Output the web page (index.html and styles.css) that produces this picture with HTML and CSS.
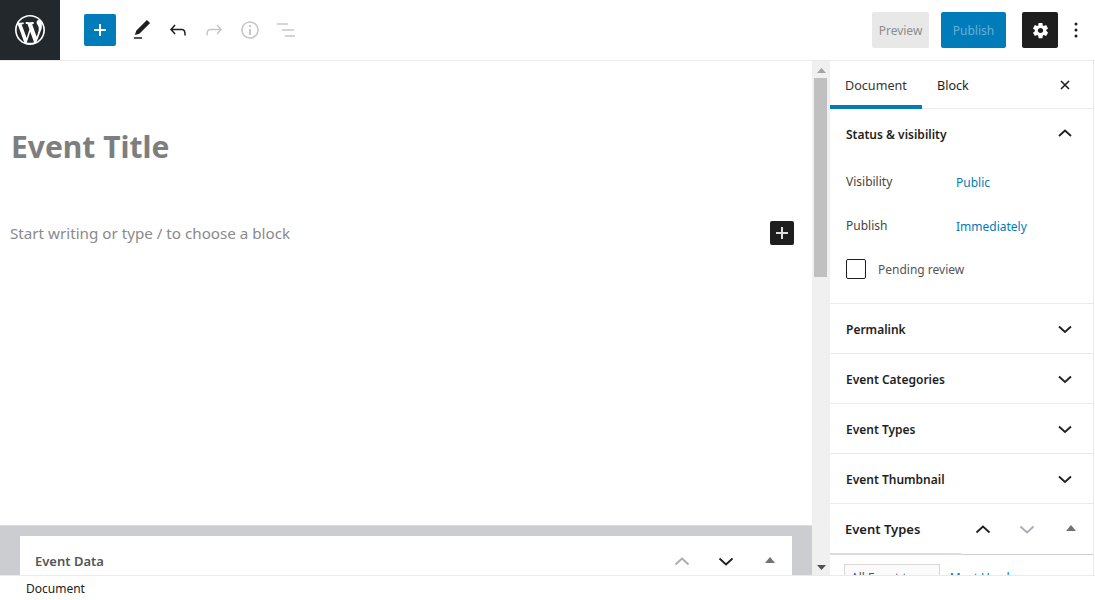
FILE: index.html
```html
<!DOCTYPE html>
<html lang="en">
<head>
<meta charset="utf-8">
<title>Add New Event</title>
<link rel="stylesheet" href="styles.css">
</head>
<body>
<div class="app">
  <header class="topbar">
    <div class="logo">
      <svg width="30" height="30" viewBox="0 0 20 20"><path fill="#fff" d="M20 10c0-5.52-4.480-10-10-10S0 4.480 0 10s4.480 10 10 10 10-4.480 10-10zM7.780 15.370L4.370 6.220c.55-.02 1.170-.08 1.170-.08.5-.06.44-1.130-.06-1.110 0 0-1.450.11-2.370.11-.18 0-.37 0-.58-.01C4.120 2.690 6.890 1.010 10 1.010c2.330 0 4.450.87 6.050 2.340-.68-.11-1.650.39-1.650 1.580 0 .74.45 1.360.9 2.100.35.61.55 1.360.55 2.460 0 1.490-1.400 5-1.400 5l-3.030-8.350c.54-.02.82-.17.82-.17.5-.05.44-1.250-.06-1.220 0 0-1.440.12-2.380.12-.87 0-2.330-.12-2.330-.12-.5-.03-.56 1.200-.06 1.220l.92.08 1.260 3.410zM17.410 10c.24-.64.74-1.870.43-4.250.7 1.290 1.050 2.710 1.050 4.250 0 3.290-1.730 6.240-4.400 7.780.97-2.590 1.940-5.200 2.920-7.780zM6.100 18.090C3.120 16.650 1.110 13.530 1.110 10c0-1.300.23-2.480.72-3.590C3.250 10.300 4.670 14.200 6.100 18.090zm4.030-6.960l2.580 6.980c-.89.29-1.820.45-2.710.45-.74 0-1.480-.1-2.160-.3.76-2.220 1.530-4.460 2.290-7.130z"/></svg>
    </div>
    <div class="tools">
      <button class="add-btn" aria-label="Add block"><svg width="16" height="16" viewBox="0 0 16 16"><path d="M7 2h2v5h5v2H9v5H7V9H2V7h5z" fill="#fff"/></svg></button>
      <svg class="tool" width="24" height="24" viewBox="0 0 24 24"><path fill="#1e1e1e" d="M20.100 5.100L16.900 2 6.200 12.700l-1.300 4.400 4.500-1.300L20.100 5.100zM4 20.800h8v-1.500H4v1.500z"/></svg>
      <svg class="tool" width="24" height="24" viewBox="0 0 24 24"><path fill="#1e1e1e" d="M18.300 11.700c-.6-.6-1.400-.9-2.300-.9H6.700l2.900-3.300-1.100-1-4.500 5L8.500 16.500l1.100-1-2.900-3.300H16c.5 0 .9.200 1.300.5 1 1 1 3.400 1 4.500v.3h1.500v-.2c0-1.500 0-4.300-1.500-5.800z"/></svg>
      <svg class="tool" width="24" height="24" viewBox="0 0 24 24"><path fill="#c7c7c7" d="M15.600 6.500l-1.100 1 2.900 3.300H8c-.9 0-1.700.3-2.300.9-1.400 1.500-1.400 4.200-1.400 5.600v.2h1.500v-.3c0-1.100 0-3.500 1-4.500.3-.3.700-.5 1.300-.5h9.200L14.500 15.500l1.100 1.100 4.500-5-4.500-5.100z"/></svg>
      <svg class="tool" width="24" height="24" viewBox="0 0 24 24"><path fill="#c7c7c7" d="M12 3.200c-4.800 0-8.800 3.900-8.800 8.800 0 4.800 3.900 8.800 8.800 8.800 4.800 0 8.800-3.900 8.800-8.800 0-4.800-4-8.800-8.800-8.800zm0 16c-4 0-7.200-3.300-7.200-7.200C4.800 8 8 4.800 12 4.800s7.200 3.300 7.200 7.200c0 4-3.200 7.200-7.200 7.200zM11 17h2v-6h-2v6zm0-8h2V7h-2v2z"/></svg>
      <svg class="tool" width="24" height="24" viewBox="0 0 24 24"><path fill="#c7c7c7" d="M3 5.200h10.800v1.500H3zM8 11.200h12v1.500H8zM10.800 17.300H21v1.500H10.800z"/></svg>
    </div>
    <div class="actions">
      <button class="preview">Preview</button>
      <button class="publish">Publish</button>
      <button class="settings" aria-label="Settings"><svg width="27" height="27" viewBox="0 0 24 24"><path fill="#fff" fill-rule="evenodd" d="M18 12.300v-.6l1.700-1.300-1.700-3-2 .8c-.3-.2-.6-.4-1-.5L14.700 5.500h-3.400L11 7.700c-.4.100-.7.300-1 .5l-2-.8-1.700 3L8 11.700v1.200l-1.700 1.300 1.700 2.900 2-.8c.3.200.6.400 1 .5l.3 2.200h3.400l.3-2.200c.4-.1.700-.3 1-.5l2 .8 1.700-2.900L18 12.300zM13 14.500c-1.300 0-2.400-1.100-2.400-2.300s1.100-2.300 2.400-2.300 2.400 1.100 2.400 2.300-1.100 2.300-2.400 2.300z" transform="translate(-1 -.2)"/></svg></button>
      <svg class="more" width="4" height="16" viewBox="0 0 4 16"><circle cx="2" cy="2" r="1.500" fill="#1e1e1e"/><circle cx="2" cy="8" r="1.500" fill="#1e1e1e"/><circle cx="2" cy="14" r="1.500" fill="#1e1e1e"/></svg>
    </div>
  </header>

  <main class="workspace">
    <section class="editor">
      <div class="canvas">
        <h1 class="title">Event Title</h1>
        <div class="block-row">
          <p class="placeholder">Start writing or type / to choose a block</p>
          <span class="inline-add"><svg width="16" height="16" viewBox="0 0 16 16"><path d="M7 2h2v5h5v2H9v5H7V9H2V7h5z" fill="#e0e0e0"/></svg></span>
        </div>
      </div>
      <div class="metaboxes">
        <div class="metabox">
          <h2>Event Data</h2>
          <div class="mb-controls">
            <svg class="chev off" width="24" height="24" viewBox="0 0 24 24"><path d="M5.500 15.500L12 9.500l6.500 6" /></svg>
            <svg class="chev" width="24" height="24" viewBox="0 0 24 24"><path d="M5.500 9.500L12 15.500l6.500-6" /></svg>
            <svg class="tri" width="10" height="6" viewBox="0 0 10 6"><path d="M5 0l5 6H0z"/></svg>
          </div>
        </div>
      </div>
    </section>

    <div class="scrollbar">
      <svg class="arrow" width="9" height="5" viewBox="0 0 9 5"><path d="M4.500 0L9 5H0z" fill="#a3a3a3"/></svg>
      <div class="thumb"></div>
      <div class="track"></div>
      <svg class="arrow" width="9" height="5" viewBox="0 0 9 5"><path d="M4.500 5L9 0H0z" fill="#505050"/></svg>
    </div>

    <aside class="sidebar">
      <div class="tabs">
        <span class="tab active">Document</span>
        <span class="tab">Block</span>
        <svg class="close" width="24" height="24" viewBox="0 0 24 24"><path d="M8 8l8 8M16 8l-8 8" stroke="#1e1e1e" stroke-width="1.600" fill="none"/></svg>
      </div>
      <div class="panel open">
        <div class="panel-head"><span>Status &amp; visibility</span><svg class="chev up" width="24" height="24" viewBox="0 0 24 24"><path d="M6 15l6-5.500L18 15"/></svg></div>
        <div class="row"><span class="label">Visibility</span><a class="link">Public</a></div>
        <div class="row"><span class="label">Publish</span><a class="link">Immediately</a></div>
        <label class="check"><span class="box"></span><span>Pending review</span></label>
      </div>
      <div class="panel"><div class="panel-head"><span>Permalink</span><svg class="chev" width="24" height="24" viewBox="0 0 24 24"><path d="M6 9.500l6 5.500 6-5.500"/></svg></div></div>
      <div class="panel"><div class="panel-head"><span>Event Categories</span><svg class="chev" width="24" height="24" viewBox="0 0 24 24"><path d="M6 9.500l6 5.500 6-5.500"/></svg></div></div>
      <div class="panel"><div class="panel-head"><span>Event Types</span><svg class="chev" width="24" height="24" viewBox="0 0 24 24"><path d="M6 9.500l6 5.500 6-5.500"/></svg></div></div>
      <div class="panel"><div class="panel-head"><span>Event Thumbnail</span><svg class="chev" width="24" height="24" viewBox="0 0 24 24"><path d="M6 9.500l6 5.500 6-5.500"/></svg></div></div>
      <div class="taxbox">
        <div class="tax-head">
          <span>Event Types</span>
          <div class="tax-controls">
            <svg class="chev" width="24" height="24" viewBox="0 0 24 24"><path d="M5.500 15.500L12 9.500l6.500 6"/></svg>
            <svg class="chev off" width="24" height="24" viewBox="0 0 24 24"><path d="M5.500 9.500L12 15.500l6.500-6"/></svg>
            <svg class="tri" width="10" height="6" viewBox="0 0 10 6"><path d="M5 0l5 6H0z"/></svg>
          </div>
        </div>
        <div class="tax-tabs"><span class="tax-tab">All Event types</span><a class="link">Most Used</a></div>
      </div>
    </aside>
  </main>

  <footer class="statusbar">Document</footer>
</div>
</body>
</html>
```
FILE: styles.css
```css
* { box-sizing: border-box; }
html, body { margin: 0; height: 100%; background: #fff; overflow: hidden; }
body { font-family: "Noto Sans", "Open Sans", sans-serif; font-size: 12px; color: #1e1e1e; }
svg { display: block; flex: none; }
button { font: inherit; border: 0; padding: 0; }

.app { display: flex; flex-direction: column; height: 600px; }

.topbar { flex: none; height: 61px; display: flex; align-items: stretch; border-bottom: 1px solid #e8eaeb; }
.logo { width: 60px; background: #23282d; display: flex; align-items: center; justify-content: center; }
.tools { display: flex; align-items: center; padding-left: 24px; }
.add-btn { width: 32px; height: 32px; background: #007cba; border-radius: 2px; display: flex; align-items: center; justify-content: center; margin-right: 14px; }
.tool { margin-right: 12px; }
.actions { margin-left: auto; display: flex; align-items: center; padding-right: 17px; }
.preview { width: 57px; height: 36px; background: #e8e8e8; color: #8d8d8d; border-radius: 2px; margin-right: 12px; }
.publish { width: 65px; height: 36px; background: #007cba; color: #66b0d6; border-radius: 2px; margin-right: 16px; }
.settings { width: 36px; height: 36px; background: #1e1e1e; border-radius: 2px; display: flex; align-items: center; justify-content: center; margin-right: 16px; }

.workspace { flex: 1; min-height: 0; display: flex; overflow: hidden; }

.editor { width: 812px; flex: none; display: flex; flex-direction: column; }
.canvas { height: 464px; flex: none; padding-top: 64px; }
.title { margin: 0; padding-left: 11px; font-size: 30px; line-height: 44px; font-weight: 700; color: #7e7e7e; }
.block-row { display: flex; align-items: center; justify-content: space-between; margin-top: 52px; padding: 0 18px 0 10px; }
.placeholder { margin: 0; font-size: 15.200px; line-height: 24px; color: #8a8a8a; }
.inline-add { width: 24px; height: 24px; background: #1e1e1e; border-radius: 2px; display: flex; align-items: center; justify-content: center; }
.metaboxes { flex: 1; background: #cbcdd1; border-top: 1px solid #dcdde0; padding: 10px 20px 0; }
.metabox { background: #fff; height: 60px; display: flex; align-items: flex-start; justify-content: space-between; padding: 15px 17px 0 15px; }
.metabox h2 { margin: 0; font-size: 13px; line-height: 20px; font-weight: 600; color: #555; }
.mb-controls, .tax-controls { display: flex; align-items: center; gap: 20px; }
.mb-controls { margin-top: -2px; }
.chev { fill: none; stroke: #1e1e1e; stroke-width: 1.800; }
.chev.off { stroke: #a8abb0; }
.chev.up { margin-top: -2px; }
.tri { fill: #6e7276; margin-left: 7px; margin-top: -3px; }

.scrollbar { width: 18px; flex: none; background: #f0f0f0; display: flex; flex-direction: column; align-items: center; padding: 7px 0 5px; }
.thumb { width: 13px; height: 199px; background: #c0c0c0; margin: 5px 1px 0 0; }
.track { flex: 1; }

.sidebar { width: 264px; flex: none; border-right: 1px solid #e8eaeb; overflow: hidden; font-size: 12px; }
.tabs { height: 48px; display: flex; align-items: stretch; border-bottom: 1px solid #e8eaeb; }
.tab { display: flex; align-items: center; padding: 2px 15px 0; font-size: 12.600px; color: #1e1e1e; }
.tab.active { width: 92px; border-bottom: 4px solid #007cba; margin-bottom: -1px; padding-top: 5px; color: #333; }
.close { margin-left: auto; margin-right: 16px; align-self: center; }

.panel { border-bottom: 1px solid #e8eaeb; }
.panel-head { height: 49px; display: flex; align-items: center; justify-content: space-between; padding: 0 16px; font-size: 12px; font-weight: 600; color: #1e1e1e; }
.panel-head span { padding-top: 2px; }
.panel.open { height: 195px; }
.panel-head + .row { margin-top: 1px; }
.row { display: flex; height: 44px; padding: 0 16px; align-items: center; }
.label { width: 110px; color: #444; }
.link { color: #007cba; }
.row .link { padding-top: 2px; }
.check { display: flex; align-items: center; padding: 0 16px; height: 44px; color: #555; gap: 12px; }
.box { width: 20px; height: 20px; border: 1px solid #1e1e1e; border-radius: 2px; }

.tax-head { height: 51px; display: flex; align-items: center; justify-content: space-between; padding: 0 17px 0 15px; font-size: 13px; font-weight: 600; border-bottom: 1px solid #cbcdd1; position: relative; }
.tax-head::after { content: ""; position: absolute; left: 0; bottom: -1px; width: 131px; height: 2px; background: #dcdcde; }
.tax-tabs { display: flex; align-items: flex-start; gap: 10px; padding: 9px 14px 0; }
.tax-tabs .link { padding-top: 5px; }
.tax-tab { border: 1px solid #d8d8d8; background: #fbfbfb; padding: 4px 6px; color: #555; }

.statusbar { flex: none; height: 25px; border-top: 1px solid #e8eaeb; padding: 3px 0 0 26px; font-size: 12px; line-height: 20px; background: #fff; color: #222; }
```
